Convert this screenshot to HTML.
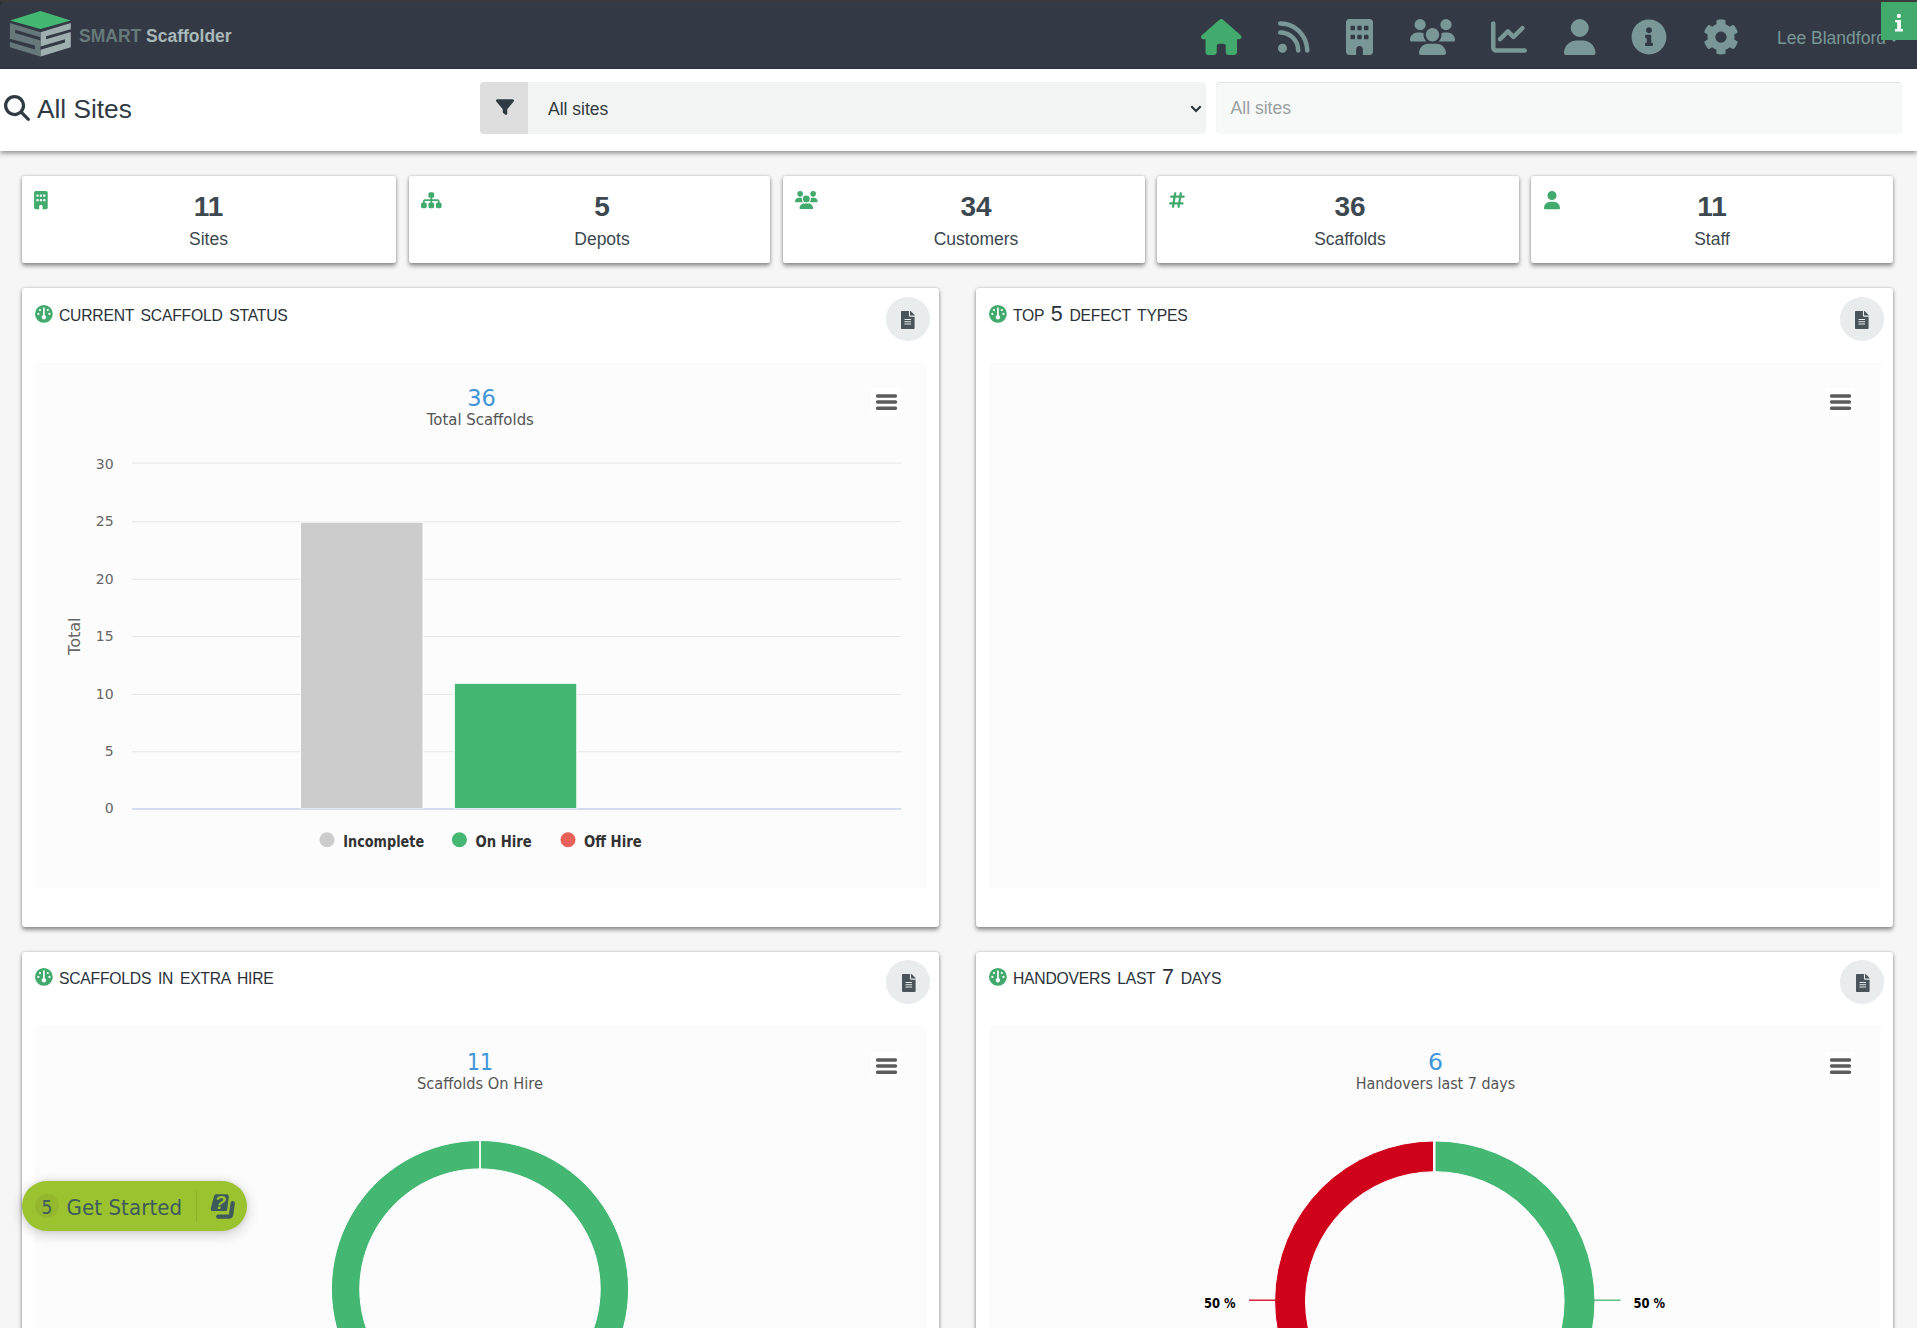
<!DOCTYPE html>
<html lang="en"><head><meta charset="utf-8"><title>SMART Scaffolder</title>
<style>
*{box-sizing:border-box}
html,body{margin:0;padding:0}
body{width:1917px;height:1328px;overflow:hidden;background:#f6f6f6;font-family:"Liberation Sans",sans-serif;color:#37474f;position:relative}
.abs{position:absolute}
.ic{position:absolute;display:block;overflow:visible}
#strip{left:0;top:0;width:1917px;height:2px;background:#3a3a3a}
#nav{left:0;top:2px;width:1917px;height:67px;background:#333a45;border-top-left-radius:5px}
#navbg{left:0;top:0;width:10px;height:10px;background:#2e2e2e}
.brand{position:absolute;left:79px;top:25.5px;font-size:17.5px;font-weight:bold;line-height:20px;white-space:pre;color:#66797b}.brand b{color:#a9b8b9}
#user{position:absolute;left:1777px;top:27px;font-size:17.5px;line-height:22px;color:#7a9797;white-space:nowrap;}
#ibadge{left:1881px;top:2px;width:36px;height:38px;background:#41aa6c}
#sub{left:0;top:69px;width:1917px;height:82px;background:#fff;box-shadow:0 2px 5px rgba(0,0,0,.45)}
#ptitle{position:absolute;left:37px;top:93px;font-size:26.25px;line-height:32px;color:#2f3b43;white-space:nowrap}
#faddon{left:480px;top:82px;width:48px;height:51.6px;background:#dedede;border-radius:4px 0 0 4px}
#fsel{left:528px;top:82px;width:677.6px;height:51.6px;background:#f2f4f4;border-radius:0 4px 4px 0;font-size:17.5px;line-height:54px;padding-left:20px;color:#333b40}
#finp{left:1215.6px;top:82.4px;width:686.6px;height:51.4px;background:#f7f8f8;border-radius:4px;box-shadow:inset 0 1px 1px rgba(0,0,0,.09);font-size:17.5px;line-height:52px;padding-left:15px;color:#9a9fa1}
.card{position:absolute;top:175.7px;height:87.2px;background:#fff;border-radius:2.5px;box-shadow:0 2.5px 4px rgba(0,0,0,.4),0 0 3px rgba(0,0,0,.16)}
.card .n{position:absolute;width:200px;top:15px;text-align:center;font-size:28px;font-weight:bold;line-height:32px;color:#3c4950}
.card .l{position:absolute;width:200px;top:52.5px;text-align:center;font-size:17.5px;line-height:22px;color:#3b474f}
.panel{position:absolute;background:#fff;border-radius:3px;box-shadow:0 2.5px 4px rgba(0,0,0,.4),0 0 3px rgba(0,0,0,.16)}
.panel h3{position:absolute;left:37px;top:12.6px;margin:0;font-weight:normal;font-size:15.7px;line-height:30px;color:#2a3238;white-space:nowrap;word-spacing:2.6px;letter-spacing:-0.22px}.panel h3 i{font-style:normal;font-size:21.5px;line-height:0;letter-spacing:0}
.cbtn{position:absolute;width:43.6px;height:43.6px;border-radius:50%;background:#e8ecec}
.chart{position:absolute;background:#fcfcfc}
svg text{font-family:"DejaVu Sans",sans-serif}
#gs{left:22px;top:1181px;width:225px;height:50px;border-radius:25px;background:#9bc22f;box-shadow:0 3px 14px rgba(0,0,0,.2),0 0 4px rgba(0,0,0,.08)}
#gs .b{position:absolute;left:13px;top:13px;width:24px;height:24px;border-radius:50%;background:#93b82e}
#gs .five{position:absolute;left:13px;top:13px;width:24px;height:24px;text-align:center;font:19px/27px "DejaVu Sans Condensed","DejaVu Sans",sans-serif;color:#3e5a5c}
#gs .t{position:absolute;left:44.6px;top:10.6px;font:22px/32px "DejaVu Sans Condensed","DejaVu Sans",sans-serif;color:#3e5a5c;white-space:nowrap;letter-spacing:0.08px}
#gs .d{position:absolute;left:173.5px;top:10px;width:1.6px;height:30px;background:#8db02d}
</style></head><body>

<div class="abs" id="navbg"></div><div class="abs" id="strip"></div><div class="abs" id="nav"></div>
<svg class="ic" style="left:0;top:0;width:90px;height:69px" viewBox="0 0 90 69">
<polygon points="40.5,11 70.8,20.4 40.5,29 10.1,20.4" fill="#44b872"/>
<path fill="#66787a" fill-rule="evenodd" d="M9.900 23 L40.400 32.200 L40.400 37.300 L15.100 29.700 L15.100 33 L40.400 40.500 L40.400 56.400 L9.900 47.300 L9.900 42 L34.900 49.400 L34.900 45.600 L9.900 38.800 Z"/>
<path fill="#9fafb0" fill-rule="evenodd" d="M70.800 23 L40.600 32.200 L40.600 46.600 L65 39.300 L65 42.600 L40.600 49.700 L40.600 56.400 L70.800 47.300 L70.800 32.100 L46 39.300 L46 36.300 L70.800 29.200 Z"/>
</svg>
<div class="brand">SMART <b>Scaffolder</b></div>
<svg class="ic" style="left:1201px;top:19px;width:40.5px;height:36px" viewBox="0 0 576 512" ><path fill="#41aa6c" d="M575.8 255.5c0 18-15 32.1-32 32.1h-32l.7 160.2c0 2.700-.2 5.400-.5 8.100V472c0 22.100-17.900 40-40 40H456c-1.100 0-2.200 0-3.300-.1c-1.400 .1-2.800 .1-4.200 .1H416 392c-22.100 0-40-17.900-40-40V448 384c0-17.700-14.300-32-32-32H256c-17.700 0-32 14.300-32 32v64 24c0 22.100-17.900 40-40 40H160 128.100c-1.500 0-3-.1-4.500-.2c-1.200 .1-2.400 .2-3.600 .2H104c-22.100 0-40-17.900-40-40V360c0-.9 0-1.900 .1-2.800V287.600H32c-18 0-32-14-32-32.100c0-9 3-17 10-24L266.400 8c7-7 15-8 22-8s15 2 21 7L564.800 231.500c8 7 12 15 11 24z"/></svg>
<svg class="ic" style="left:1277.5px;top:19px;width:31.5px;height:36px" viewBox="0 0 448 512" ><path fill="#7a9797" d="M0 64C0 46.300 14.300 32 32 32c229.800 0 416 186.200 416 416c0 17.700-14.300 32-32 32s-32-14.300-32-32C384 253.600 226.400 96 32 96C14.300 96 0 81.700 0 64zM0 416a64 64 0 1 1 128 0A64 64 0 1 1 0 416zM32 160c159.100 0 288 128.900 288 288c0 17.700-14.300 32-32 32s-32-14.300-32-32c0-123.700-100.300-224-224-224c-17.700 0-32-14.300-32-32s14.300-32 32-32z"/></svg>
<svg class="ic" style="left:1346px;top:19px;width:27px;height:36px" viewBox="0 0 384 512" ><path fill="#7a9797" d="M48 0C21.500 0 0 21.500 0 48V464c0 26.500 21.500 48 48 48h96V432c0-26.500 21.500-48 48-48s48 21.500 48 48v80h96c26.500 0 48-21.500 48-48V48c0-26.500-21.500-48-48-48H48zM64 240c0-8.800 7.200-16 16-16h32c8.800 0 16 7.200 16 16v32c0 8.800-7.200 16-16 16H80c-8.800 0-16-7.200-16-16V240zm112-16h32c8.800 0 16 7.200 16 16v32c0 8.800-7.200 16-16 16H176c-8.800 0-16-7.200-16-16V240c0-8.800 7.200-16 16-16zm80 16c0-8.800 7.200-16 16-16h32c8.800 0 16 7.200 16 16v32c0 8.800-7.200 16-16 16H272c-8.800 0-16-7.200-16-16V240zM80 96h32c8.800 0 16 7.200 16 16v32c0 8.800-7.200 16-16 16H80c-8.800 0-16-7.200-16-16V112c0-8.800 7.200-16 16-16zm80 16c0-8.800 7.200-16 16-16h32c8.800 0 16 7.200 16 16v32c0 8.800-7.200 16-16 16H176c-8.800 0-16-7.200-16-16V112zM272 96h32c8.800 0 16 7.200 16 16v32c0 8.800-7.200 16-16 16H272c-8.800 0-16-7.200-16-16V112c0-8.800 7.200-16 16-16z"/></svg>
<svg class="ic" style="left:1409.5px;top:19px;width:45px;height:36px" viewBox="0 0 640 512" ><path fill="#7a9797" d="M144 0a80 80 0 1 1 0 160A80 80 0 1 1 144 0zM512 0a80 80 0 1 1 0 160A80 80 0 1 1 512 0zM0 298.700C0 239.800 47.800 192 106.700 192h42.700c15.900 0 31 3.500 44.600 9.700c-1.300 7.200-1.900 14.700-1.900 22.300c0 38.200 16.800 72.500 43.300 96c-.2 0-.4 0-.7 0H21.300C9.600 320 0 310.400 0 298.700zM405.300 320c-.2 0-.4 0-.7 0c26.600-23.500 43.300-57.800 43.300-96c0-7.600-.7-15-1.900-22.300c13.600-6.300 28.700-9.700 44.600-9.700h42.700C592.200 192 640 239.800 640 298.700c0 11.800-9.600 21.300-21.300 21.300H405.300zM224 224a96 96 0 1 1 192 0 96 96 0 1 1 -192 0zM128 485.300C128 411.700 187.700 352 261.300 352H378.700C452.300 352 512 411.700 512 485.300c0 14.700-11.900 26.700-26.700 26.700H154.700c-14.700 0-26.700-11.900-26.700-26.700z"/></svg>
<svg class="ic" style="left:1491px;top:19px;width:36px;height:36px" viewBox="0 0 512 512" ><path fill="#7a9797" d="M64 64c0-17.700-14.300-32-32-32S0 46.300 0 64V400c0 44.200 35.800 80 80 80H480c17.700 0 32-14.300 32-32s-14.300-32-32-32H80c-8.800 0-16-7.200-16-16V64zm406.600 86.600c12.500-12.500 12.500-32.800 0-45.300s-32.800-12.500-45.300 0L320 210.700l-57.400-57.400c-12.500-12.500-32.800-12.500-45.300 0l-112 112c-12.500 12.500-12.500 32.800 0 45.300s32.800 12.500 45.300 0L240 221.300l57.400 57.400c12.500 12.500 32.800 12.500 45.300 0l128-128z"/></svg>
<svg class="ic" style="left:1564px;top:19px;width:31.5px;height:36px" viewBox="0 0 448 512" ><path fill="#7a9797" d="M224 256A128 128 0 1 0 224 0a128 128 0 1 0 0 256zm-45.700 48C79.800 304 0 383.800 0 482.300C0 498.700 13.300 512 29.700 512H418.300c16.400 0 29.700-13.300 29.700-29.700C448 383.800 368.200 304 269.700 304H178.300z"/></svg>
<svg class="ic" style="left:1631.2px;top:18.6px;width:36px;height:36px" viewBox="0 0 512 512" ><path fill="#7a9797" d="M256 8C119.043 8 8 119.083 8 256c0 136.997 111.043 248 248 248s248-111.003 248-248C504 119.083 392.957 8 256 8zm0 110c23.196 0 42 18.804 42 42s-18.804 42-42 42-42-18.804-42-42 18.804-42 42-42zm56 254c0 6.627-5.373 12-12 12h-88c-6.627 0-12-5.373-12-12v-24c0-6.627 5.373-12 12-12h12v-64h-12c-6.627 0-12-5.373-12-12v-24c0-6.627 5.373-12 12-12h64c6.627 0 12 5.373 12 12v100h12c6.627 0 12 5.373 12 12v24z"/></svg>
<svg class="ic" style="left:1703px;top:18.6px;width:36px;height:36px" viewBox="0 0 512 512" ><path fill="#7a9797" d="M487.4 315.7l-42.600-24.600c4.300-23.200 4.300-47 0-70.200l42.600-24.600c4.900-2.800 7.100-8.600 5.500-14-11.100-35.600-30-67.800-54.700-94.600-3.800-4.100-10-5.100-14.800-2.300L380.800 110c-17.900-15.400-38.500-27.300-60.800-35.100V25.800c0-5.600-3.900-10.500-9.400-11.700-36.700-8.200-74.300-7.800-109.200 0-5.500 1.200-9.400 6.100-9.400 11.700V75c-22.200 7.900-42.800 19.800-60.800 35.100L88.700 85.500c-4.900-2.800-11-1.900-14.800 2.300-24.700 26.700-43.600 58.900-54.700 94.600-1.700 5.400.6 11.200 5.500 14L67.300 221c-4.300 23.200-4.300 47 0 70.200l-42.600 24.600c-4.900 2.800-7.100 8.600-5.500 14 11.100 35.600 30 67.800 54.700 94.600 3.800 4.100 10 5.100 14.800 2.300l42.600-24.600c17.900 15.400 38.500 27.300 60.800 35.100v49.200c0 5.600 3.900 10.500 9.400 11.700 36.700 8.200 74.300 7.800 109.200 0 5.500-1.200 9.400-6.100 9.400-11.700v-49.200c22.200-7.900 42.800-19.800 60.800-35.100l42.600 24.600c4.900 2.800 11 1.900 14.800-2.300 24.700-26.700 43.600-58.900 54.700-94.600 1.500-5.500-.7-11.300-5.600-14.100zM256 336c-44.100 0-80-35.900-80-80s35.900-80 80-80 80 35.900 80 80-35.900 80-80 80z"/></svg>
<div id="user">Lee Blandford</div>
<svg class="ic" style="left:1889px;top:37px;width:10px;height:5px" viewBox="0 0 10 5"><path d="M0 0H10L5 5Z" fill="#7a9797"/></svg>
<div class="abs" id="ibadge"></div>
<svg class="ic" style="left:1890px;top:10px;width:18px;height:24px" viewBox="1890 10 18 24"><circle cx="1898.850" cy="15.950" r="2.100" fill="#fff"/><path fill="#fff" d="M1895.200 20.100H1900.900V29.100H1902.900V31.400H1895V29.100H1897.200V22.300H1895.200Z"/></svg>
<div class="abs" id="sub"></div>
<svg class="ic" style="left:4px;top:95px;width:26px;height:26px" viewBox="0 0 512 512" ><path fill="#2f3b43" d="M416 208c0 45.900-14.900 88.300-40 122.700L502.600 457.400c12.500 12.500 12.500 32.800 0 45.300s-32.800 12.500-45.300 0L330.700 376c-34.400 25.200-76.800 40-122.700 40C93.100 416 0 322.900 0 208S93.100 0 208 0S416 93.100 416 208zM208 352a144 144 0 1 0 0-288 144 144 0 1 0 0 288z"/></svg>
<div id="ptitle">All Sites</div>
<div class="abs" id="faddon"></div>
<svg class="ic" style="left:495.7px;top:98px;width:18px;height:18px" viewBox="0 0 512 512" ><path fill="#2f3b43" d="M3.900 54.900C10.500 40.900 24.500 32 40 32H472c15.500 0 29.500 8.900 36.100 22.900s4.600 30.500-5.200 42.500L320 320.900V448c0 12.100-6.800 23.200-17.700 28.600s-23.800 4.300-33.500-3l-64-48c-8.100-6-12.800-15.500-12.800-25.600V320.900L9 97.300C-.7 85.400-2.800 68.800 3.900 54.900z"/></svg>
<div class="abs" id="fsel">All sites</div>
<svg class="ic" style="left:1190px;top:105px;width:12px;height:8px" viewBox="0 0 12 8"><path d="M1.300 1.300L6 6L10.700 1.300" fill="none" stroke="#2a3238" stroke-width="2.1" stroke-linecap="butt" stroke-linejoin="miter"/></svg>
<div class="abs" id="finp">All sites</div>
<div class="card" style="left:22px;width:374px"><div class="n" style="left:86.5px">11</div><div class="l" style="left:86.5px">Sites</div></div>
<svg class="ic" style="left:34.1px;top:190.9px;width:13.8px;height:18.2px" viewBox="0 0 384 512" ><path fill="#41aa6c" d="M48 0C21.500 0 0 21.500 0 48V464c0 26.500 21.500 48 48 48h96V432c0-26.500 21.500-48 48-48s48 21.500 48 48v80h96c26.500 0 48-21.500 48-48V48c0-26.500-21.500-48-48-48H48zM64 240c0-8.800 7.200-16 16-16h32c8.800 0 16 7.200 16 16v32c0 8.800-7.200 16-16 16H80c-8.800 0-16-7.200-16-16V240zm112-16h32c8.800 0 16 7.200 16 16v32c0 8.800-7.200 16-16 16H176c-8.800 0-16-7.200-16-16V240c0-8.800 7.200-16 16-16zm80 16c0-8.800 7.200-16 16-16h32c8.800 0 16 7.200 16 16v32c0 8.800-7.200 16-16 16H272c-8.800 0-16-7.200-16-16V240zM80 96h32c8.800 0 16 7.200 16 16v32c0 8.800-7.200 16-16 16H80c-8.800 0-16-7.200-16-16V112c0-8.800 7.200-16 16-16zm80 16c0-8.800 7.200-16 16-16h32c8.800 0 16 7.200 16 16v32c0 8.800-7.200 16-16 16H176c-8.800 0-16-7.200-16-16V112zM272 96h32c8.800 0 16 7.200 16 16v32c0 8.800-7.200 16-16 16H272c-8.800 0-16-7.200-16-16V112c0-8.800 7.200-16 16-16z"/></svg>
<div class="card" style="left:409px;width:361px"><div class="n" style="left:93px">5</div><div class="l" style="left:93px">Depots</div></div>
<svg class="ic" style="left:421.2px;top:190.9px;width:20.6px;height:18.3px" viewBox="0 0 576 512" ><path fill="#41aa6c" d="M208 80c0-26.500 21.500-48 48-48h64c26.500 0 48 21.500 48 48v64c0 26.500-21.500 48-48 48h-8v40H464c30.900 0 56 25.100 56 56v32h8c26.500 0 48 21.500 48 48v64c0 26.500-21.500 48-48 48H464c-26.500 0-48-21.500-48-48V368c0-26.500 21.500-48 48-48h8V288c0-4.400-3.600-8-8-8H312v40h8c26.500 0 48 21.500 48 48v64c0 26.500-21.500 48-48 48H256c-26.500 0-48-21.500-48-48V368c0-26.500 21.500-48 48-48h8V280H112c-4.400 0-8 3.600-8 8v32h8c26.500 0 48 21.500 48 48v64c0 26.500-21.500 48-48 48H48c-26.500 0-48-21.500-48-48V368c0-26.500 21.500-48 48-48h8V288c0-30.900 25.100-56 56-56H264V192h-8c-26.500 0-48-21.500-48-48V80z"/></svg>
<div class="card" style="left:783px;width:362px"><div class="n" style="left:93px">34</div><div class="l" style="left:93px">Customers</div></div>
<svg class="ic" style="left:795.4px;top:191px;width:22.7px;height:18.1px" viewBox="0 0 640 512" ><path fill="#41aa6c" d="M144 0a80 80 0 1 1 0 160A80 80 0 1 1 144 0zM512 0a80 80 0 1 1 0 160A80 80 0 1 1 512 0zM0 298.700C0 239.800 47.800 192 106.700 192h42.700c15.900 0 31 3.500 44.600 9.700c-1.300 7.200-1.900 14.700-1.900 22.300c0 38.200 16.800 72.500 43.300 96c-.2 0-.4 0-.7 0H21.300C9.600 320 0 310.400 0 298.700zM405.300 320c-.2 0-.4 0-.7 0c26.600-23.500 43.300-57.800 43.300-96c0-7.600-.7-15-1.900-22.300c13.600-6.300 28.700-9.700 44.600-9.700h42.700C592.200 192 640 239.800 640 298.700c0 11.800-9.600 21.300-21.300 21.300H405.300zM224 224a96 96 0 1 1 192 0 96 96 0 1 1 -192 0zM128 485.300C128 411.700 187.700 352 261.300 352H378.700C452.300 352 512 411.700 512 485.300c0 14.700-11.900 26.700-26.700 26.700H154.700c-14.700 0-26.700-11.900-26.700-26.700z"/></svg>
<div class="card" style="left:1157px;width:362px"><div class="n" style="left:93px">36</div><div class="l" style="left:93px">Scaffolds</div></div>
<svg class="ic" style="left:1169.2px;top:190.9px;width:15.8px;height:18px" viewBox="0 0 448 512" ><path fill="#41aa6c" d="M181.300 32.400c17.400 2.900 29.200 19.400 26.300 36.800L197.800 128h95.100l11.500-69.300c2.900-17.400 19.400-29.200 36.800-26.300s29.200 19.400 26.300 36.800L357.800 128H416c17.700 0 32 14.300 32 32s-14.300 32-32 32H347.100L325.800 320H384c17.700 0 32 14.300 32 32s-14.300 32-32 32H315.100l-11.500 69.300c-2.900 17.400-19.400 29.200-36.800 26.300s-29.200-19.400-26.300-36.800l9.800-58.700H155.100l-11.500 69.300c-2.900 17.400-19.400 29.200-36.800 26.300s-29.200-19.400-26.300-36.800L90.200 384H32c-17.700 0-32-14.300-32-32s14.300-32 32-32h68.900l21.300-128H64c-17.700 0-32-14.300-32-32s14.300-32 32-32h68.900l11.500-69.300c2.900-17.400 19.400-29.200 36.800-26.300zM187.100 192L165.800 320h95.100l21.300-128H187.100z"/></svg>
<div class="card" style="left:1531px;width:362px"><div class="n" style="left:81px">11</div><div class="l" style="left:81px">Staff</div></div>
<svg class="ic" style="left:1543.7px;top:190.9px;width:16px;height:18.2px" viewBox="0 0 448 512" ><path fill="#41aa6c" d="M224 256A128 128 0 1 0 224 0a128 128 0 1 0 0 256zm-45.700 48C79.800 304 0 383.800 0 482.300C0 498.700 13.300 512 29.700 512H418.300c16.400 0 29.700-13.300 29.700-29.700C448 383.800 368.200 304 269.700 304H178.300z"/></svg>
<div class="panel" style="left:22px;top:288px;width:917.2px;height:639.2px"><h3 style="top:12.6px">CURRENT SCAFFOLD STATUS</h3><div class="cbtn" style="left:864.4000000000001px;top:9.0px"></div><div class="chart" style="left:13px;top:74.5px;width:891.7px;height:525px"></div></div>
<svg class="ic" style="left:34.8px;top:305.2px;width:17.8px;height:17.8px" viewBox="0 0 512 512"><path fill="#41aa6c" d="M0 256a256 256 0 1 1 512 0A256 256 0 1 1 0 256zm320 96c0-26.900-16.500-49.900-40-59.300V88c0-13.300-10.700-24-24-24s-24 10.700-24 24V292.700c-23.500 9.500-40 32.500-40 59.300c0 35.300 28.700 64 64 64s64-28.700 64-64zM144 176a32 32 0 1 0 0-64 32 32 0 1 0 0 64zm-16 80a32 32 0 1 0 -64 0 32 32 0 1 0 64 0zm288 32a32 32 0 1 0 0-64 32 32 0 1 0 0 64zM400 144a32 32 0 1 0 -64 0 32 32 0 1 0 64 0z"/></svg>
<svg class="ic" style="left:901.4000000000001px;top:310.9px;width:13.6px;height:18.1px" viewBox="0 0 384 512" ><path fill="#49535a" d="M224 136V0H24C10.700 0 0 10.700 0 24v464c0 13.300 10.700 24 24 24h336c13.300 0 24-10.700 24-24V160H248c-13.200 0-24-10.800-24-24zm64 236c0 6.600-5.400 12-12 12H108c-6.600 0-12-5.400-12-12v-8c0-6.600 5.400-12 12-12h168c6.600 0 12 5.400 12 12v8zm0-64c0 6.600-5.400 12-12 12H108c-6.600 0-12-5.400-12-12v-8c0-6.600 5.400-12 12-12h168c6.600 0 12 5.400 12 12v8zm0-72v8c0 6.600-5.400 12-12 12H108c-6.600 0-12-5.400-12-12v-8c0-6.600 5.400-12 12-12h168c6.600 0 12 5.400 12 12zm96-114.100v6.100H256V0h6.100c6.400 0 12.500 2.500 17 7l97.900 98c4.500 4.500 7 10.600 7 16.900z"/></svg>
<svg class="ic" style="left:871.2px;top:388px;width:30px;height:28px" viewBox="0 0 30 28"><rect x="0" y="0" width="30" height="28" rx="3" fill="#fff"/><path d="M6.500 8H24.500M6.500 14H24.500M6.500 20.200H24.500" stroke="#5c5c5c" stroke-width="3.400" stroke-linecap="round" fill="none"/></svg>
<div class="panel" style="left:976px;top:288px;width:917.2px;height:639.2px"><h3 style="top:12.6px">TOP <i>5</i> DEFECT TYPES</h3><div class="cbtn" style="left:864.4000000000001px;top:9.0px"></div><div class="chart" style="left:13px;top:74.5px;width:891.7px;height:525px"></div></div>
<svg class="ic" style="left:988.8px;top:305.2px;width:17.8px;height:17.8px" viewBox="0 0 512 512"><path fill="#41aa6c" d="M0 256a256 256 0 1 1 512 0A256 256 0 1 1 0 256zm320 96c0-26.900-16.500-49.900-40-59.300V88c0-13.300-10.700-24-24-24s-24 10.700-24 24V292.700c-23.500 9.500-40 32.500-40 59.300c0 35.300 28.700 64 64 64s64-28.700 64-64zM144 176a32 32 0 1 0 0-64 32 32 0 1 0 0 64zm-16 80a32 32 0 1 0 -64 0 32 32 0 1 0 64 0zm288 32a32 32 0 1 0 0-64 32 32 0 1 0 0 64zM400 144a32 32 0 1 0 -64 0 32 32 0 1 0 64 0z"/></svg>
<svg class="ic" style="left:1855.4px;top:310.9px;width:13.6px;height:18.1px" viewBox="0 0 384 512" ><path fill="#49535a" d="M224 136V0H24C10.700 0 0 10.700 0 24v464c0 13.300 10.700 24 24 24h336c13.300 0 24-10.700 24-24V160H248c-13.200 0-24-10.800-24-24zm64 236c0 6.600-5.400 12-12 12H108c-6.600 0-12-5.400-12-12v-8c0-6.600 5.400-12 12-12h168c6.600 0 12 5.400 12 12v8zm0-64c0 6.600-5.400 12-12 12H108c-6.600 0-12-5.400-12-12v-8c0-6.600 5.400-12 12-12h168c6.600 0 12 5.400 12 12v8zm0-72v8c0 6.600-5.400 12-12 12H108c-6.600 0-12-5.400-12-12v-8c0-6.600 5.400-12 12-12h168c6.600 0 12 5.400 12 12zm96-114.100v6.100H256V0h6.100c6.400 0 12.500 2.500 17 7l97.900 98c4.500 4.500 7 10.600 7 16.900z"/></svg>
<svg class="ic" style="left:1825.2px;top:388px;width:30px;height:28px" viewBox="0 0 30 28"><rect x="0" y="0" width="30" height="28" rx="3" fill="#fff"/><path d="M6.500 8H24.500M6.500 14H24.500M6.500 20.200H24.500" stroke="#5c5c5c" stroke-width="3.400" stroke-linecap="round" fill="none"/></svg>
<div class="panel" style="left:22px;top:951.6px;width:917.2px;height:420px"><h3 style="top:12.3px">SCAFFOLDS IN EXTRA HIRE</h3><div class="cbtn" style="left:864.4000000000001px;top:8.6px"></div><div class="chart" style="left:13px;top:74.5px;width:891.7px;height:400px"></div></div>
<svg class="ic" style="left:34.8px;top:967.9px;width:17.8px;height:17.8px" viewBox="0 0 512 512"><path fill="#41aa6c" d="M0 256a256 256 0 1 1 512 0A256 256 0 1 1 0 256zm320 96c0-26.900-16.500-49.900-40-59.300V88c0-13.300-10.700-24-24-24s-24 10.700-24 24V292.700c-23.500 9.500-40 32.500-40 59.300c0 35.300 28.700 64 64 64s64-28.700 64-64zM144 176a32 32 0 1 0 0-64 32 32 0 1 0 0 64zm-16 80a32 32 0 1 0 -64 0 32 32 0 1 0 64 0zm288 32a32 32 0 1 0 0-64 32 32 0 1 0 0 64zM400 144a32 32 0 1 0 -64 0 32 32 0 1 0 64 0z"/></svg>
<svg class="ic" style="left:901.8000000000001px;top:974.1px;width:13.6px;height:18.1px" viewBox="0 0 384 512" ><path fill="#49535a" d="M224 136V0H24C10.700 0 0 10.700 0 24v464c0 13.300 10.700 24 24 24h336c13.300 0 24-10.700 24-24V160H248c-13.200 0-24-10.800-24-24zm64 236c0 6.600-5.400 12-12 12H108c-6.600 0-12-5.400-12-12v-8c0-6.600 5.400-12 12-12h168c6.600 0 12 5.400 12 12v8zm0-64c0 6.600-5.400 12-12 12H108c-6.600 0-12-5.400-12-12v-8c0-6.600 5.400-12 12-12h168c6.600 0 12 5.400 12 12v8zm0-72v8c0 6.600-5.400 12-12 12H108c-6.600 0-12-5.400-12-12v-8c0-6.600 5.400-12 12-12h168c6.600 0 12 5.400 12 12zm96-114.100v6.100H256V0h6.100c6.400 0 12.500 2.500 17 7l97.900 98c4.500 4.500 7 10.600 7 16.900z"/></svg>
<svg class="ic" style="left:871.2px;top:1051.6px;width:30px;height:28px" viewBox="0 0 30 28"><rect x="0" y="0" width="30" height="28" rx="3" fill="#fff"/><path d="M6.500 8H24.500M6.500 14H24.500M6.500 20.200H24.500" stroke="#5c5c5c" stroke-width="3.400" stroke-linecap="round" fill="none"/></svg>
<div class="panel" style="left:976px;top:951.6px;width:917.2px;height:420px"><h3 style="top:12.3px">HANDOVERS LAST <i>7</i> DAYS</h3><div class="cbtn" style="left:864.4000000000001px;top:8.6px"></div><div class="chart" style="left:13px;top:74.5px;width:891.7px;height:400px"></div></div>
<svg class="ic" style="left:988.8px;top:967.9px;width:17.8px;height:17.8px" viewBox="0 0 512 512"><path fill="#41aa6c" d="M0 256a256 256 0 1 1 512 0A256 256 0 1 1 0 256zm320 96c0-26.900-16.500-49.900-40-59.300V88c0-13.300-10.700-24-24-24s-24 10.700-24 24V292.700c-23.500 9.500-40 32.500-40 59.300c0 35.300 28.700 64 64 64s64-28.700 64-64zM144 176a32 32 0 1 0 0-64 32 32 0 1 0 0 64zm-16 80a32 32 0 1 0 -64 0 32 32 0 1 0 64 0zm288 32a32 32 0 1 0 0-64 32 32 0 1 0 0 64zM400 144a32 32 0 1 0 -64 0 32 32 0 1 0 64 0z"/></svg>
<svg class="ic" style="left:1855.8px;top:974.1px;width:13.6px;height:18.1px" viewBox="0 0 384 512" ><path fill="#49535a" d="M224 136V0H24C10.700 0 0 10.700 0 24v464c0 13.300 10.700 24 24 24h336c13.300 0 24-10.700 24-24V160H248c-13.200 0-24-10.800-24-24zm64 236c0 6.600-5.400 12-12 12H108c-6.600 0-12-5.400-12-12v-8c0-6.600 5.400-12 12-12h168c6.600 0 12 5.400 12 12v8zm0-64c0 6.600-5.400 12-12 12H108c-6.600 0-12-5.400-12-12v-8c0-6.600 5.400-12 12-12h168c6.600 0 12 5.400 12 12v8zm0-72v8c0 6.600-5.400 12-12 12H108c-6.600 0-12-5.400-12-12v-8c0-6.600 5.400-12 12-12h168c6.600 0 12 5.400 12 12zm96-114.100v6.100H256V0h6.100c6.400 0 12.500 2.500 17 7l97.900 98c4.500 4.500 7 10.600 7 16.900z"/></svg>
<svg class="ic" style="left:1825.2px;top:1051.6px;width:30px;height:28px" viewBox="0 0 30 28"><rect x="0" y="0" width="30" height="28" rx="3" fill="#fff"/><path d="M6.500 8H24.500M6.500 14H24.500M6.500 20.200H24.500" stroke="#5c5c5c" stroke-width="3.400" stroke-linecap="round" fill="none"/></svg>
<svg class="ic" style="left:35px;top:362px;width:891px;height:525px" viewBox="35 362 891 525">
<text x="481.500" y="406" text-anchor="middle" font-size="23.500" fill="#4096d8" textLength="28.600" lengthAdjust="spacingAndGlyphs">36</text>
<text x="480.300" y="424.800" text-anchor="middle" font-size="15.200" fill="#555" textLength="107.200" lengthAdjust="spacingAndGlyphs">Total Scaffolds</text>
<rect x="132" y="462.6" width="769" height="1" fill="#e6e6e6"/>
<rect x="132" y="521.2" width="769" height="1" fill="#e6e6e6"/>
<rect x="132" y="578.8" width="769" height="1" fill="#e6e6e6"/>
<rect x="132" y="636.0" width="769" height="1" fill="#e6e6e6"/>
<rect x="132" y="693.9" width="769" height="1" fill="#e6e6e6"/>
<rect x="132" y="751.2" width="769" height="1" fill="#e6e6e6"/>
<text x="113.700" y="468.8" text-anchor="end" font-size="14" fill="#666">30</text>
<text x="113.700" y="526.4" text-anchor="end" font-size="14" fill="#666">25</text>
<text x="113.700" y="584" text-anchor="end" font-size="14" fill="#666">20</text>
<text x="113.700" y="640.9" text-anchor="end" font-size="14" fill="#666">15</text>
<text x="113.700" y="698.7" text-anchor="end" font-size="14" fill="#666">10</text>
<text x="113.700" y="755.8" text-anchor="end" font-size="14" fill="#666">5</text>
<text x="113.700" y="813.2" text-anchor="end" font-size="14" fill="#666">0</text>
<rect x="132" y="808.400" width="769" height="1.100" fill="#ccd6eb"/>
<text transform="translate(80,636.200) rotate(-90)" text-anchor="middle" font-size="16" fill="#666" textLength="37.500" lengthAdjust="spacingAndGlyphs">Total</text>
<rect x="300.500" y="522.100" width="122.500" height="286.400" fill="#cccccc" stroke="#fff" stroke-width="1"/>
<rect x="454.300" y="683.300" width="122.500" height="125.200" fill="#44b873" stroke="#fff" stroke-width="1"/>
<rect x="132" y="808.400" width="769" height="1.100" fill="#ccd6eb"/>
<circle cx="327" cy="839.700" r="7.500" fill="#cccccc"/><circle cx="459.400" cy="839.700" r="7.500" fill="#44b873"/><circle cx="568" cy="839.700" r="7.500" fill="#e8605a"/>
<text x="343.300" y="846.600" font-size="15.800" font-weight="bold" fill="#333" lengthAdjust="spacingAndGlyphs" style="font-family:'DejaVu Sans Condensed','DejaVu Sans',sans-serif" textLength="80.800">Incomplete</text>
<text x="475.500" y="846.600" font-size="15.800" font-weight="bold" fill="#333" lengthAdjust="spacingAndGlyphs" style="font-family:'DejaVu Sans Condensed','DejaVu Sans',sans-serif" textLength="56.300">On Hire</text>
<text x="584" y="846.600" font-size="15.800" font-weight="bold" fill="#333" lengthAdjust="spacingAndGlyphs" style="font-family:'DejaVu Sans Condensed','DejaVu Sans',sans-serif" textLength="57.800">Off Hire</text>
</svg>
<svg class="ic" style="left:35px;top:1026px;width:891px;height:302px" viewBox="35 1026 891 302">
<text x="480" y="1069.500" text-anchor="middle" font-size="23.500" fill="#4096d8" textLength="26" lengthAdjust="spacingAndGlyphs">11</text>
<text x="480" y="1088.800" text-anchor="middle" font-size="15.200" fill="#555" textLength="126" lengthAdjust="spacingAndGlyphs">Scaffolds On Hire</text>
<path d="M480.00 1140.50A148.6 148.6 0 1 1 479.97 1140.50L479.98 1168.90A120.2 120.2 0 1 0 480.00 1168.90Z" fill="#44b873" stroke="#fff" stroke-width="1" stroke-linejoin="round"/>
<rect x="479.400" y="1139" width="1.300" height="31" fill="#fcfcfc" fill-opacity="0.850"/>
</svg>
<svg class="ic" style="left:989px;top:1026px;width:891px;height:302px" viewBox="989 1026 891 302">
<text x="1435.500" y="1069.500" text-anchor="middle" font-size="23.500" fill="#4096d8">6</text>
<text x="1435.500" y="1088.800" text-anchor="middle" font-size="15.200" fill="#555" textLength="159.500" lengthAdjust="spacingAndGlyphs">Handovers last 7 days</text>
<path d="M1434.80 1140.90A160.2 160.2 0 0 1 1434.80 1461.30L1434.80 1430.50A129.4 129.4 0 0 0 1434.80 1171.70Z" fill="#44b873" stroke="#fff" stroke-width="1" stroke-linejoin="round"/>
<path d="M1434.80 1461.30A160.2 160.2 0 0 1 1434.80 1140.90L1434.80 1171.70A129.4 129.4 0 0 0 1434.80 1430.50Z" fill="#d0021b" stroke="#fff" stroke-width="1" stroke-linejoin="round"/>
<rect x="1433" y="1139" width="2" height="34" fill="#fcfcfc"/>
<path d="M1249 1300.200H1276" stroke="#d0021b" stroke-width="1.300"/><path d="M1594 1300.200H1620.500" stroke="#44b873" stroke-width="1.300"/>
<text x="1204" y="1308.300" font-size="14.500" font-weight="bold" fill="#000" stroke="#fff" stroke-width="2" paint-order="stroke" stroke-linejoin="round" lengthAdjust="spacingAndGlyphs" textLength="31.600" style="font-family:'DejaVu Sans Condensed',sans-serif">50 %</text>
<text x="1633.500" y="1308.300" font-size="14.500" font-weight="bold" fill="#000" stroke="#fff" stroke-width="2" paint-order="stroke" stroke-linejoin="round" lengthAdjust="spacingAndGlyphs" textLength="31.600" style="font-family:'DejaVu Sans Condensed',sans-serif">50 %</text>
</svg>
<div class="abs" id="gs"><div class="b"></div><div class="five">5</div><div class="t">Get Started</div><div class="d"></div>
<svg class="ic" style="left:188px;top:12px;width:28px;height:28px" viewBox="0 0 28 28"><path d="M22.700 10.200L21.200 21.300Q20.900 23.600 18.700 23.600L8.300 23.600" fill="none" stroke="#3e5a5c" stroke-width="4.400" stroke-linecap="round" stroke-linejoin="round"/><path d="M6.300 3.400L16.600 3.400L15.100 15.900L2.900 15.900Z" fill="#9bc22f" stroke="#9bc22f" stroke-width="6.600" stroke-linejoin="round"/><path d="M6.300 3.400L16.600 3.400L15.100 15.900L2.900 15.900Z" fill="#3e5a5c" stroke="#3e5a5c" stroke-width="4.400" stroke-linejoin="round"/><text x="10.300" y="16.300" text-anchor="middle" font-size="18.500" font-weight="bold" font-style="italic" fill="#9bc22f" style="font-family:'Liberation Sans',sans-serif">?</text></svg></div>
</body></html>
